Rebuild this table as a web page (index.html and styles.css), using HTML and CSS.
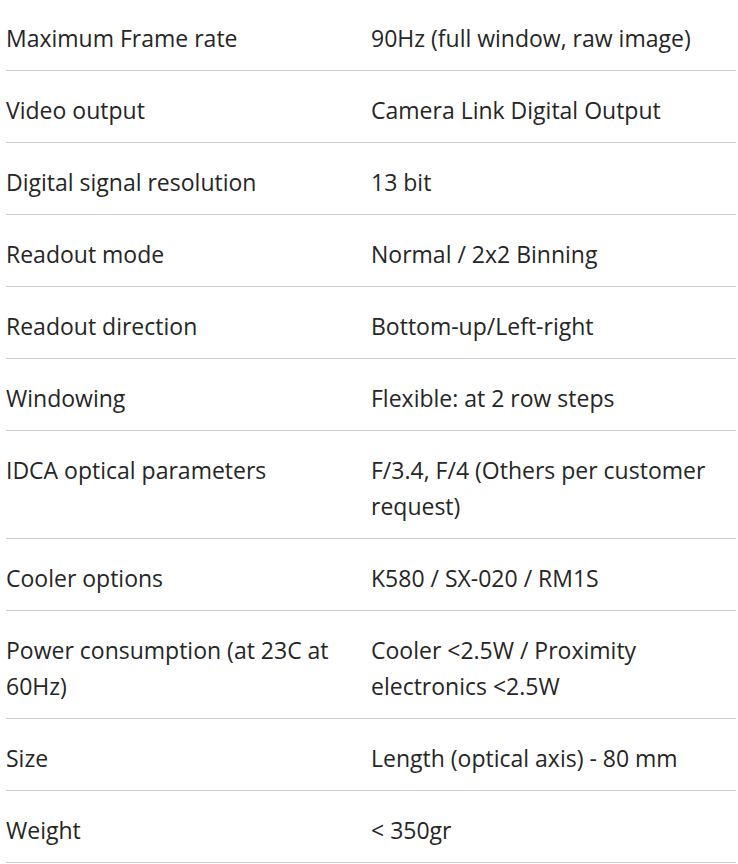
FILE: index.html
```html
<!DOCTYPE html>
<html>
<head>
<meta charset="utf-8">
<link rel="stylesheet" href="styles.css">
</head>
<body>
<table class="specs">
<tbody>
<tr><td>Maximum Frame rate</td><td>90Hz (full window, raw image)</td></tr>
<tr><td>Video output</td><td>Camera Link Digital Output</td></tr>
<tr><td>Digital signal resolution</td><td>13 bit</td></tr>
<tr><td>Readout mode</td><td>Normal / 2x2 Binning</td></tr>
<tr><td>Readout direction</td><td>Bottom-up/Left-right</td></tr>
<tr><td>Windowing</td><td>Flexible: at 2 row steps</td></tr>
<tr><td>IDCA optical parameters</td><td>F/3.4, F/4 (Others per customer request)</td></tr>
<tr><td>Cooler options</td><td>K580 / SX-020 / RM1S</td></tr>
<tr><td>Power consumption (at 23C at 60Hz)</td><td>Cooler &lt;2.5W / Proximity electronics &lt;2.5W</td></tr>
<tr><td>Size</td><td>Length (optical axis) - 80 mm</td></tr>
<tr><td>Weight</td><td>&lt; 350gr</td></tr>
</tbody>
</table>
</body>
</html>
```
FILE: styles.css
```css
html, body {
  margin: 0;
  padding: 0;
  background: #fff;
}
.specs {
  margin: -1px 0 0 6px;
  width: 730px;
  border-collapse: collapse;
  table-layout: fixed;
  font-family: "Open Sans", "Liberation Sans", sans-serif;
  font-size: 23px;
  font-weight: 400;
  line-height: 36px;
  color: #262626;
}
.specs td {
  width: 50%;
  padding: 21px 0 14px 0;
  vertical-align: top;
  border-bottom: 1px solid #d0d0d0;
}
```
